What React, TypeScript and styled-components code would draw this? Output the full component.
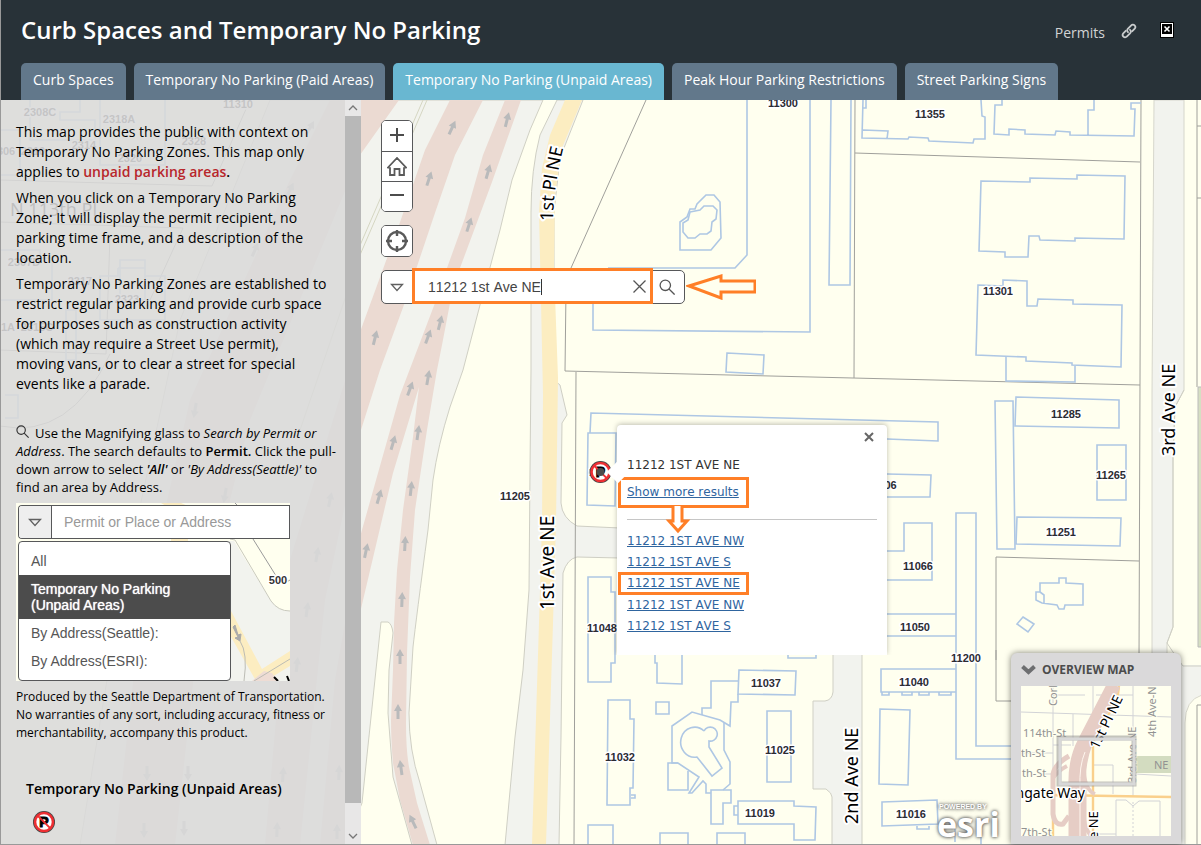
import React from "react";
import styled, { createGlobalStyle, css } from "styled-components";

const UI = '"Open Sans", "Noto Sans", sans-serif';
const ARIAL = '"Liberation Sans", Arial, sans-serif';
const VERDANA = '"DejaVu Sans", Verdana, sans-serif';
const ORANGE = "#ff7f27";
const LINE = "#57585a";

const GlobalStyle = createGlobalStyle`
  *, *::before, *::after { box-sizing: border-box; }
  body { margin: 0; background: #ffffef; font-family: ${UI}; color: #000; }
  p, h1, h2, h3, ul { margin: 0; padding: 0; }
  button { font: inherit; margin: 0; padding: 0; cursor: pointer; }
`;

/* ---------- page frame ---------- */
const Page = styled.div`
  display: flex;
  flex-direction: column;
  min-height: 100vh;
  border-left: 1px solid #999;
  border-bottom: 1px solid #999;
`;

const Header = styled.header`
  display: flex;
  flex-direction: column;
  background: #283238;
  color: #fff;
`;

const TitleRow = styled.div`
  display: flex;
  align-items: center;
  justify-content: space-between;
  height: 63px;
  padding: 0 27px 4px 20px;
`;

const Title = styled.h1`
  font-size: 24px;
  font-weight: 600;
  line-height: 32px;
`;

const HeaderLinks = styled.div`
  display: flex;
  align-items: center;
`;

const PermitsLink = styled.a`
  margin: 6px 16px 0 0;
  color: #d2d4d5;
  font-size: 14px;
  line-height: 20px;
  text-decoration: none;
`;

const IconLink = styled.a`
  display: flex;
  margin: 2px 23px 0 0;
`;

const CloseBox = styled.button`
  display: flex;
  border: 0;
  background: none;
`;

const TabBar = styled.nav`
  display: flex;
  gap: 8px;
  padding-left: 20px;
`;

const Tab = styled.button<{ $active?: boolean }>`
  height: 37px;
  padding: 0 12px 3px;
  border: 0;
  border-radius: 5px 5px 0 0;
  background: ${(p) => (p.$active ? "#69b7d1" : "#62788b")};
  color: #fff;
  font-size: 14px;
  line-height: 20px;
  white-space: nowrap;
`;

const Main = styled.main`
  flex: 1;
  display: grid;
  grid-template-columns: 360px minmax(0, 1fr);
  grid-template-rows: minmax(744px, 1fr);
  background: #ffffef;
`;

const MapDrawing = styled.svg`
  grid-column: 1 / -1;
  grid-row: 1;
  width: 100%;
  height: 100%;
`;

/* ---------- side panel ---------- */
const Panel = styled.aside`
  grid-column: 1;
  grid-row: 1;
  display: flex;
  z-index: 1;
`;

const PanelBody = styled.div`
  flex: 1;
  padding: 22px 16px 0 15px;
  background: rgba(218, 217, 218, 0.88);
`;

const Copy = styled.p`
  margin-bottom: 6px;
  font-size: 14px;
  line-height: 20px;
`;

const Warn = styled.strong`
  font-weight: 600;
  color: #b8262b;
`;

const Strong = styled.strong`
  font-weight: 600;
`;

const Hint = styled.p`
  margin: 30px -10px 7px 0;
  font-size: 13px;
  line-height: 18px;
`;

const InlineIcon = styled.svg`
  margin-right: 6px;
`;

const Disclaimer = styled.p`
  margin-top: 7px;
  font-size: 12px;
  line-height: 18px;
`;

const Legend = styled.section`
  padding: 37px 0 0 10px;
`;

const LegendTitle = styled.h2`
  margin-bottom: 11px;
  font-size: 14px;
  font-weight: 600;
  line-height: 20px;
`;

const LegendSwatch = styled.div`
  padding-left: 6px;
`;

const ScrollBar = styled.div`
  display: flex;
  flex-direction: column;
  width: 16px;
  background: #e8e7e7;
`;

const ScrollButton = styled.button`
  display: flex;
  align-items: center;
  justify-content: center;
  height: 16px;
  border: 0;
  background: #e8e7e7;
`;

const ScrollThumb = styled.div`
  flex: 1;
  margin-bottom: 25px;
  background: #b8b8b8;
`;

/* ---------- search sample ---------- */
const Sample = styled.div`
  display: grid;
  width: 274px;
  height: 178px;
  overflow: hidden;
  background: #f2f3ee;
`;

const SampleBackdrop = styled.svg`
  grid-area: 1 / 1;
`;

const SampleWidgets = styled.div`
  grid-area: 1 / 1;
  z-index: 1;
  padding: 2px 0 0 2px;
`;

const SampleField = styled.div`
  display: flex;
  height: 34px;
  border: 1px solid ${LINE};
  border-right: 0;
  border-radius: 4px 0 0 4px;
  background: #fff;
  overflow: hidden;
`;

const arrowButton = css`
  display: flex;
  align-items: center;
  justify-content: center;
  flex: none;
  border: 0;
`;

const SampleArrow = styled.button`
  ${arrowButton}
  width: 33px;
  border-right: 1px solid ${LINE};
  background: #eee;
`;

const SampleInput = styled.input`
  flex: 1;
  min-width: 0;
  padding: 0 12px;
  border: 0;
  border-right: 1px solid ${LINE};
  font: 14px ${ARIAL};
  font-kerning: none;
  color: #444;
  outline: 0;
  &::placeholder { color: #999; opacity: 1; }
`;

const SampleMenu = styled.ul`
  width: 213px;
  margin-top: 2px;
  padding: 5px 0;
  border: 1px solid ${LINE};
  border-radius: 4px;
  background: #fff;
  list-style: none;
`;

const SampleItem = styled.li<{ $selected?: boolean }>`
  padding: 6px 40px 6px 12px;
  font: 14px/16px ${ARIAL};
  color: #565656;
  ${(p) =>
    p.$selected &&
    css`
      background: #4c4c4c;
      color: #fff;
      text-shadow: 0 0 1px #fff;
    `}
`;

/* ---------- map overlays ---------- */
const MapArea = styled.div`
  grid-column: 2;
  grid-row: 1;
  position: relative;
  display: flex;
  flex-direction: column;
  align-items: flex-start;
  gap: 13px;
  padding: 20px;
  z-index: 1;
`;

const ToolStack = styled.div`
  display: flex;
  flex-direction: column;
  width: 32px;
  border: 1px solid ${LINE};
  border-radius: 5px;
  background: #fff;
  overflow: hidden;
`;

const Tool = styled.button`
  ${arrowButton}
  height: 30px;
  background: #fff;
  & + & { border-top: 1px solid ${LINE}; }
`;

const SearchRow = styled.div`
  display: flex;
  align-items: center;
  gap: 1px;
`;

const SearchBar = styled.form`
  display: flex;
  width: 304px;
  height: 34px;
  border: 1px solid ${LINE};
  border-radius: 5px;
  background: #fff;
`;

const SearchButton = styled.button<{ $width: number }>`
  ${arrowButton}
  width: ${(p) => p.$width}px;
  background: none;
  &[type="submit"] { padding-right: 3px; }
`;

const SearchField = styled.div`
  position: relative;
  flex: 1;
  display: flex;
  align-items: center;
  margin: -3px 0 -1px;
  border: 3px solid ${ORANGE};
  background: #fff;
`;

const SearchInput = styled.input`
  flex: 1;
  min-width: 0;
  padding: 2px 0 0 13px;
  border: 0;
  background: none;
  font: 14px ${ARIAL};
  font-kerning: none;
  color: #444;
  outline: 0;
`;

const Caret = styled.span`
  position: absolute;
  left: 126px;
  top: 8px;
  width: 1px;
  height: 16px;
  background: #333;
`;

const ClearButton = styled.button`
  ${arrowButton}
  width: 22px;
  background: none;
`;

const Popup = styled.section`
  position: absolute;
  left: 256px;
  top: 325px;
  width: 270px;
  height: 230px;
  padding: 0 10px;
  border-radius: 4px 4px 0 0;
  background: #fff;
  box-shadow: 0 -1px 5px rgba(0, 0, 0, 0.25);
  clip-path: inset(-8px -8px 0 -20px);
  font: 12px/16px ${VERDANA};
  font-kerning: none;
  color: #333;
`;

const PopupTail = styled.span`
  position: absolute;
  left: -7px;
  top: 39px;
  width: 16px;
  height: 16px;
  background: #fff;
  transform: rotate(45deg);
`;

const PopupTop = styled.div`
  display: flex;
  justify-content: flex-end;
  height: 32px;
  padding: 4px 0 12px;
`;

const PopupClose = styled.button`
  ${arrowButton}
  width: 16px;
  height: 16px;
  background: none;
`;

const PopupTitle = styled.p`
  line-height: 16px;
`;

const Marked = styled.div<{ $tall?: boolean }>`
  width: 131px;
  margin: ${(p) => (p.$tall ? "0 0 0 -9px" : "-1px 0 0 -9px")};
  padding: ${(p) => (p.$tall ? "4px 6px 5px" : "0 6px")};
  border: 3px solid ${ORANGE};
  line-height: ${(p) => (p.$tall ? 16 : 17)}px;
`;

const PopupLink = styled.a`
  color: #2f659f;
  text-decoration: underline;
`;

const MoreResults = styled.div`
  display: flex;
  flex-direction: column;
  margin-top: 4px;
`;

const Divider = styled.div`
  height: 1px;
  margin-top: 11px;
  background: #c6c6c6;
`;

const ResultRow = styled.div`
  line-height: 21px;
`;

const Results = styled.div`
  padding-top: 11px;
`;

const DownArrow = styled.svg`
  position: absolute;
  left: 48px;
  top: 81px;
`;

const Overview = styled.section`
  position: absolute;
  right: 20px;
  bottom: 0;
  width: 170px;
  padding: 0 10px 8px;
  border-radius: 6px 6px 0 0;
  background: #dad9da;
  box-shadow: 0 0 6px rgba(0, 0, 0, 0.5);
`;

const OverviewTitle = styled.h2`
  display: flex;
  align-items: center;
  gap: 6px;
  height: 33px;
  font-size: 12px;
  font-weight: 700;
  line-height: 16px;
  color: #4c4c4c;
`;

const OverviewMap = styled.svg`
  display: block;
  background: #ffffef;
`;

const Powered = styled.a`
  position: absolute;
  right: 202px;
  bottom: 0;
  display: flex;
  flex-direction: column;
  width: 62px;
  color: #fff;
  font-weight: 700;
  text-decoration: none;
  text-shadow: 0 0 3px #555, 0 0 4px #777;
`;

const PoweredBy = styled.span`
  padding-left: 2px;
  font: 700 7px/8px ${ARIAL};
`;

const Esri = styled.span`
  margin-top: -7px;
  font: 700 34px/40px ${UI};
`;

/* ---------- icons ---------- */
const Triangle = () => (
  <svg width="14" height="9" viewBox="0 0 14 9" fill="none" stroke="#606060" strokeWidth="1.3">
    <path d="M1.5 1.5h11L7 7.5z" />
  </svg>
);

const magnifierPath = (
  <>
    <circle cx="6.3" cy="6.3" r="5.2" />
    <path d="M10 10l5.6 5.6" />
  </>
);

const NoParkingMark = () => (
  <>
    <circle r="11" fill="#444" />
    <circle r="9" fill="#fff" stroke="#ee2f33" strokeWidth="2.6" />
    <text y="5" textAnchor="middle" fontFamily={ARIAL} fontSize="14" fontWeight="bold" stroke="#000" strokeWidth="1">P</text>
    <path d="M-6.4-6.4L6.4 6.4" stroke="#ee2f33" strokeWidth="2" />
  </>
);

const NoParking = () => (
  <svg width="24" height="24" viewBox="-12 -12 24 24">
    <NoParkingMark />
  </svg>
);

/* ---------- map data ---------- */
const flow: [number, number, number][] = [
  [452, 128, 25], [429, 179, 18], [507, 120, 14], [488, 172, 16], [469, 225, 18], [440, 323, 14],
  [428, 337, 20], [375, 338, 14], [428, 378, 10], [410, 389, 20], [393, 443, 16], [418, 433, 8],
  [411, 489, 6], [379, 497, 16], [405, 544, 3], [366, 551, 12], [402, 600, 2], [400, 657, 0],
  [398, 712, 0], [401, 768, -8], [413, 822, -26], [310, 128, 30], [290, 190, 26], [255, 250, 24],
  [195, 410, 190], [225, 495, 190], [330, 500, 12], [317, 555, 10], [307, 610, 8], [297, 665, 6],
  [147, 773, 180], [188, 773, 180], [283, 775, 4], [339, 773, 2], [144, 830, 180], [184, 828, 180],
  [277, 830, 2], [337, 832, 0],
];

const houseNumbers: [number, number, string][] = [
  [783, 107, "11300"], [930, 118, "11355"], [998, 295, "11301"], [1066, 418, "11285"],
  [1111, 479, "11265"], [1061, 536, "11251"], [918, 570, "11066"], [915, 631, "11050"],
  [966, 662, "11200"], [914, 686, "11040"], [911, 818, "11016"], [515, 500, "11205"],
  [602, 632, "11048"], [620, 761, "11032"], [766, 687, "11037"], [780, 754, "11025"],
  [760, 817, "11019"], [882, 489, "11106"], [604, 476, "11212"], [238, 108, "11310"],
  [40, 116, "2308C"], [119, 123, "2318A"], [84, 149, "2314"], [194, 145, "2328"],
  [130, 162, "2320"], [3, 155, "2306"], [33, 155, "2310"], [24, 266, "2307D"],
  [80, 285, "2317"], [127, 303, "2323"], [8, 331, "1A"], [37, 331, "2315C"],
];

const parcels = [
  "M646 100L571 268L566 290L565 371L1140 385", "M576 372L574 845", "M855 100L854 378",
  "M855 153L1140 162", "M1141 100L1139 660", "M996 660V557L1139 561", "M996 650V701H1020",
  "M1197 100V387M1197 126h5M1197 198h5M1197 845V705h5",
  "M0 180L212 186L250 100M0 222L183 228L150 300M110 235L106 354L0 350M0 426Q70 440 110 354",
];

const buildings = [
  "M747 100V255L735 268H608", "M810 100V332L593 330V303", "M831 100L829 285H850L851 100",
  "M863 100L862 138L908 139L909 137L928 138L929 141L973 143L974 139H985V117L982 116L981 100M863 130L888 131L887 139M866 100V108H863",
  "M1002 100V105H995L994 134L1009 135V129L1025 130V134L1055 135L1056 131L1070 132V135L1134 136L1135 109H1131V103H1141M1088 135V110H1094V100",
  "M981 181L1030 182V178L1077 179V175L1125 176L1124 239L1075 238V241L1040 240L1039 236H1029L1028 257H1005V252L979 251Z",
  "M978 285L1003 286V280L1027 281V306H1037L1038 299L1073 300V304L1122 305L1121 367L1072 365V363L1026 361V357L976 355Z",
  "M1006 357V381L1075 382V366", "M727 353L764 355L763 374L726 372Z",
  "M706 195H714L720 202L721 238L711 250H680V222L687 217L690 209H695L697 204Z",
  "M690 212L700 210L704 206H713L717 210L716 219L712 222L711 231L707 234H700L695 238H688L683 232V223L688 220Z",
  "M590 433L591 413L938 422V441L887 439", "M588 433H616L615 506L587 505Z",
  "M887 474L931 475L930 497H887", "M887 551H904V523H932V580H887",
  "M1020 759H956V513H976V746H1020", "M887 614H956M887 636H956",
  "M995 401H1013L1015 549H997Z", "M1016 397L1119 400V428L1015 426Z", "M1097 445H1126V500H1097Z",
  "M1017 517L1121 518L1120 546L1016 544Z",
  "M1040 583H1059V578H1066V583L1083 584V605H1065L1064 609H1059L1057 605L1042 603L1036 600V592H1040ZM1040 592L1044 595V603",
  "M1023 617L1034 624L1028 632L1017 624Z",
  "M588 577H611V592H615V663H611V682H588Z", "M655 655V663H657V683L682 684V655", "M788 655V658H816V655",
  "M739 670L796 671L795 695L738 694Z", "M738 681H711V708H702V715", "M738 694V702H731L730 726L720 720L692 712L672 726V763H678L699 777L689 793H692L703 781L706 784V793H711",
  "M724 723V750L730 762V784L723 790", "M678 763H668V790H688V771",
  "M704 731A14 15 0 1 0 697 757L712 776L722 768L709 747V741A7 7 0 1 0 704 731",
  "M711 790H731V803H723V824H711Z", "M608 700H630V719H634L633 788H630V805H607ZM631 795h4v3h-4",
  "M656 702H669V714H656Z", "M767 711H791V782H767Z",
  "M738 801H794V806L816 807L815 840H794V824H738ZM738 806H734V815H738",
  "M588 845V825H613V845", "M660 845V833H688V845", "M717 845V833H745V845",
  "M956 669H881V692H956M882 692v3h7v-3M902 692v3h10v-3M919 692v3h10v-3M939 692v3h12v-3",
  "M880 709L910 710L908 785L879 784Z", "M882 802L937 800L938 824L882 826ZM917 826v3h12v-3", "M955 826V842M981 826V845",
  "M30 100V140H95V120H60V112H80V100M100 100V165H165V100M0 130H20V175H0M118 268V276H100V320H165V276H145V268H118M120 260H145V300H120ZM0 250H40V258H52V300H0M66 310H76V360H66ZM5 395H18V418H5",
];

const CityMap = () => (
  <MapDrawing role="img" aria-label="Street map">
    <g transform="translate(-1 -100)">
      <path d="M543 100L530 130L512 180L500 230L480 305L463 370L450 407Q438 445 433 480L428 530Q416 620 413 647L409 713Q409 750 420 783L437 845H80L120 600L180 320L270 100Z" fill="#f2f3ee" stroke="#d0d0c4" />
      <g fill="#ebdad2">
        <path d="M399 100L360 155L250 420L200 620L175 845H115L140 620L190 400L290 180L330 100Z" />
        <path d="M450 100L483 100L455 155L436 210L405 302L380 370L360 433L325 600L300 845H265L290 560L360 332L398 228L425 150Z" />
        <path d="M505 100H521L492 182L460 268L450 303L442 345L437 370L427 430L415 510L410 577L407 653L406 723Q406 750 409 767L417 803L430 845H413L400 800L393 763Q391 740 391 720L393 670L394 623L397 570L403 510L413 437L419 387L393 473L360 613L350 700L345 845H320L335 680L360 537L400 395L435 303L447 268L465 218L483 155Z" />
      </g>
      <path d="M427 100L360 255L300 430M423 100L358 250" fill="none" stroke="#d5d6c2" />
      <path d="M381 622H388Q392 624 393 633L389 670L388 713L393 777L412 845H345L362 803Z" fill="#ffffef" stroke="#d0d0c4" />
      <path d="M557 100L540 135Q531 170 531 212V370L530 470L529 590L523 670L515 737L505 845H559L561 737L563 573Q567 559 577 557L620 558V528L577 526Q562 518 561 503L562 423L567 415L560 385L554 380V212L560 158L583 100Z" fill="#f2f3ee" stroke="#cfcfc4" />
      <path d="M565 100H582L562 148L555 195L554 268L558 378L556 523L553 623L546 845H532L539 623L542 523L543 395L541 302L539 212L542 168L550 135Z" fill="#fcedc1" />
      <path d="M833 650V692Q832 700 825 701H813V789H826Q832 793 832 797V845H862V650Z" fill="#f2f3ee" stroke="#cfcfc4" />
      <path d="M1154 100H1184V390L1175 407L1173 457V627L1167 643V660H1202V695Q1185 700 1185 723V845H1152V395Z" fill="#f2f3ee" stroke="#d6d6cc" />
      <path d="M1184 390L1175 407L1173 457V627L1167 643L1173 652L1183 666H1202" fill="none" stroke="#cfcfc4" />
      <path d="M1174 628L1168 643L1174 652L1183 665H1201V640H1190V420Z" fill="#ffffef" />
      <path d="M1198 387H1203V647H1198Z" fill="#d6dfc2" stroke="#bbb" />
      <g fill="none" stroke="#a0a09b">{parcels.map((d) => <path key={d} d={d} />)}</g>
      <g fill="none" stroke="#aec7e4" strokeWidth="1.6">{buildings.map((d) => <path key={d} d={d} />)}</g>
      <g fill="#b9babb">
        {flow.map(([x, y, r]) => (
          <path key={`${x}-${y}`} transform={`translate(${x} ${y}) rotate(${r})`} d="M0-8L4-1H1.5V7H-1.5V-1H-4Z" />
        ))}
      </g>
      <g fontFamily={ARIAL} fontSize="11" fontWeight="bold" fill="#2b2b33" textAnchor="middle" stroke="#fff" strokeWidth="3" strokeLinejoin="round" paintOrder="stroke">
        {houseNumbers.map(([x, y, t]) => <text key={t} x={x} y={y}>{t}</text>)}
      </g>
      <g fontFamily='"Noto Sans", sans-serif' fontSize="18" fill="#000" stroke="#fff" strokeWidth="4" strokeLinejoin="round" paintOrder="stroke">
        <path id="place-curve" d="M553 221Q553 185 568 130" fill="none" stroke="none" />
        <text><textPath href="#place-curve">1st Pl NE</textPath></text>
        <text transform="translate(554 610) rotate(-90)" fontSize="19">1st Ave NE</text>
        <text transform="translate(858 824) rotate(-90)">2nd Ave NE</text>
        <text transform="translate(1175 456) rotate(-90)">3rd Ave NE</text>
        <text x="10" y="216">N 113th Pl</text>
      </g>
      <g transform="translate(600.5 472)">
        <NoParkingMark />
        <circle r="4" fill="#4c4c4c" />
      </g>
    </g>
  </MapDrawing>
);

const MiniMap = () => (
  <OverviewMap width="150" height="150" viewBox="0 0 150 150" role="img" aria-label="Overview map">
    <g fill="none" stroke="#d2d3d6">
      <path d="M0 26L150 31M32 0V110M32 9H64M52 28V60M72 0V28M112 0V110M75 9H112M0 67H32M18 88H32M32 59H50M114 88L150 90M73 79H92V108M95 150V114H105L112 120L118 115H139V150M72 148H95" />
      <path d="M112 116V150" strokeDasharray="2 2" />
    </g>
    <path d="M114 70H150V87H114Z" fill="#d3dcc0" />
    <g fill="none" stroke="#fad08c" strokeWidth="2.4">
      <path d="M98 0L96 16L78 42L72 58V150M32 109L150 111M32 109V150" />
    </g>
    <g fill="none" stroke="#e6cdc5">
      <path d="M92 0L63 56Q53 75 54 100V150" strokeWidth="13" />
      <path d="M96 0L68 58Q60 78 62 100V150" strokeWidth="7" />
      <path d="M48 70Q34 78 32 88V128Q34 140 42 138L48 130" strokeWidth="5" />
      <path d="M32 92Q38 84 46 80M63 86Q64 104 74 108M62 124Q62 140 70 150" strokeWidth="4" />
    </g>
    <path d="M64 66Q58 80 59 102V150" fill="none" stroke="#fff6ee" />
    <g fontFamily='"Noto Sans", sans-serif' fontSize="11" fill="#929292" stroke="#ffffef" strokeWidth="2" paintOrder="stroke">
      <text x="2" y="51">114th-St</text>
      <text x="0" y="71">th-St</text>
      <text x="1" y="91">th-St</text>
      <text x="0" y="150">7th-St</text>
      <text transform="translate(36 20) rotate(-90)">Corliss</text>
      <text transform="translate(135 51) rotate(-90)">4th Ave-NE</text>
      <text transform="translate(115 97) rotate(-90)">3rd Ave NE</text>
      <text x="133" y="83" stroke="none">NE</text>
    </g>
    <g fontFamily='"Noto Sans", sans-serif' fontSize="14" fill="#000" stroke="#fff" strokeWidth="3" strokeLinejoin="round" paintOrder="stroke">
      <text x="64" y="112" textAnchor="end">ngate Way</text>
      <text transform="translate(77 64) rotate(-64)">1st Pl NE</text>
      <text transform="translate(77 153) rotate(-90)" fontSize="13">e NE</text>
    </g>
    <rect x="38" y="52" width="75" height="46" fill="none" stroke="#8a8a8a" strokeWidth="5" opacity="0.5" />
    <rect x="39" y="53" width="74" height="45" fill="none" stroke="#d8d8d8" strokeWidth="3" />
  </OverviewMap>
);

const tabs = [
  "Curb Spaces",
  "Temporary No Parking (Paid Areas)",
  "Temporary No Parking (Unpaid Areas)",
  "Peak Hour Parking Restrictions",
  "Street Parking Signs",
];

const sampleItems = ["All", "Temporary No Parking (Unpaid Areas)", "By Address(Seattle):", "By Address(ESRI):"];

const results = ["11212 1ST AVE NW", "11212 1ST AVE S", "11212 1ST AVE NE", "11212 1ST AVE NW", "11212 1ST AVE S"];

export default function App() {
  return (
    <Page>
      <GlobalStyle />
      <Header>
        <TitleRow>
          <Title>Curb Spaces and Temporary No Parking</Title>
          <HeaderLinks>
            <PermitsLink href="#permits">Permits</PermitsLink>
            <IconLink href="#link" aria-label="Copy link">
              <svg width="16" height="16" viewBox="0 0 16 16" fill="none" stroke="#c9cccd" strokeWidth="1.8" strokeLinecap="round">
                <path d="M7 9.2C5.8 8 6 6.6 7 5.6L10 2.6C11.2 1.4 12.600 1.4 13.6 2.4S14.6 4.8 13.5 6L11.3 8.2" />
                <path d="M9 6.8C10.2 8 10 9.4 9 10.4L6 13.4C4.8 14.6 3.4 14.6 2.4 13.6S1.4 11.2 2.5 10L4.7 7.8" />
              </svg>
            </IconLink>
            <CloseBox aria-label="Close">
              <svg width="14" height="16" viewBox="0 0 14 16">
                <path d="M0 0h14v16H0z" fill="#000" />
                <path d="M1 1h12v14H1z" fill="#fff" />
                <path d="M2 2h10v10H2z" fill="#000" />
                <path d="M4.5 4.5l5 5m0-5l-5 5" stroke="#fff" strokeWidth="1.6" />
              </svg>
            </CloseBox>
          </HeaderLinks>
        </TitleRow>
        <TabBar>
          {tabs.map((t, i) => <Tab key={t} $active={i === 2}>{t}</Tab>)}
        </TabBar>
      </Header>

      <Main>
        <CityMap />

        <Panel>
          <PanelBody>
            <Copy>
              This map provides the public with context on Temporary No Parking Zones. This map only applies to{" "}
              <Warn>unpaid parking areas</Warn><Strong>.</Strong>
            </Copy>
            <Copy>
              When you click on a Temporary No Parking Zone; It will display the permit recipient, no parking time
              frame, and a description of the location.
            </Copy>
            <Copy>
              Temporary No Parking Zones are established to restrict regular parking and provide curb space for purposes
              such as construction activity (which may require a Street Use permit), moving vans, or to clear a street
              for special events like a parade.
            </Copy>
            <Hint>
              <InlineIcon width="13" height="13" viewBox="0 0 16 16" fill="none" stroke="#333" strokeWidth="1.4">{magnifierPath}</InlineIcon>
              Use the Magnifying glass to <em>Search by Permit or Address</em>. The search defaults to{" "}
              <Strong>Permit.</Strong> Click the pull-down arrow to select <em><Strong>'All'</Strong></em> or{" "}
              <em>'By Address(Seattle)'</em> to find an area by Address.
            </Hint>
            <Sample>
              <SampleBackdrop width="274" height="178" viewBox="0 0 274 178">
                <path d="M0 0H274V38H0ZM218 38L255 98Q262 108 274 108V38ZM0 36H6V178H0Z" fill="#ffffef" />
                <path d="M145 0H165L172 3H150ZM155 36H172V40H155Z" fill="#fcedc1" />
                <path d="M214 36L219 37L255 98Q262 108 274 108" fill="none" stroke="#c9c9be" />
                <path d="M215 108L246 166L274 148V163L256 174L262 178H240L214 132Z" fill="#fcedc1" />
                <path d="M219 0L222 3M237 36L262 76L267 81L274 77" fill="none" stroke="#9a9a9a" />
                <path d="M236 178L248 168L256 170L262 178Z" fill="#eedcd4" />
                <path d="M217 124L222 134L219 135L224 138L225 131L222 132L219 122Z" fill="#aaa" stroke="#aaa" />
                <path d="M238 178L274 156M224 138Q232 150 228 178" fill="none" stroke="#bcbcb4" />
                <path d="M258 174L262 178M271 173L273 178" stroke="#000" strokeWidth="2" />
                <text x="262" y="81" textAnchor="middle" fontFamily={ARIAL} fontSize="11" fontWeight="bold" fill="#333" stroke="#fff" strokeWidth="3" paintOrder="stroke">500</text>
              </SampleBackdrop>
              <SampleWidgets>
                <SampleField>
                  <SampleArrow aria-label="Choose a source"><Triangle /></SampleArrow>
                  <SampleInput aria-label="Sample search" placeholder="Permit or Place or Address" />
                </SampleField>
                <SampleMenu>
                  {sampleItems.map((t, i) => <SampleItem key={t} $selected={i === 1}>{t}</SampleItem>)}
                </SampleMenu>
              </SampleWidgets>
            </Sample>
            <Disclaimer>
              Produced by the Seattle Department of Transportation. No warranties of any sort, including accuracy,
              fitness or merchantability, accompany this product.
            </Disclaimer>
            <Legend>
              <LegendTitle>Temporary No Parking (Unpaid Areas)</LegendTitle>
              <LegendSwatch><NoParking /></LegendSwatch>
            </Legend>
          </PanelBody>
          <ScrollBar>
            <ScrollButton aria-label="Scroll up">
              <svg width="10" height="6" viewBox="0 0 10 6" fill="none" stroke="#777" strokeWidth="1.3"><path d="M1 5l4-4 4 4" /></svg>
            </ScrollButton>
            <ScrollThumb />
            <ScrollButton aria-label="Scroll down">
              <svg width="10" height="6" viewBox="0 0 10 6" fill="none" stroke="#777" strokeWidth="1.3"><path d="M1 1l4 4 4-4" /></svg>
            </ScrollButton>
          </ScrollBar>
        </Panel>

        <MapArea>
          <ToolStack>
            <Tool aria-label="Zoom in">
              <svg width="16" height="16" viewBox="0 0 16 16" stroke="#4c4c4c" strokeWidth="2"><path d="M1 7h14M8 0v14" /></svg>
            </Tool>
            <Tool aria-label="Home">
              <svg width="20" height="20" viewBox="0 1 20 20" fill="none" stroke="#5a5a5a" strokeWidth="1.8">
                <path d="M1 11.5L10 2L19 11.5L17 12V19H12.500V13H7.500V19H3V12Z" />
              </svg>
            </Tool>
            <Tool aria-label="Zoom out">
              <svg width="16" height="16" viewBox="0 0 16 16" stroke="#4c4c4c" strokeWidth="2"><path d="M1 6h14" /></svg>
            </Tool>
          </ToolStack>
          <ToolStack>
            <Tool aria-label="Find my location">
              <svg width="22" height="22" viewBox="0 0 22 22" fill="none" stroke="#5a5a5a" strokeWidth="2.4">
                <circle cx="11" cy="11" r="9" />
                <path d="M11 0v6M11 16v6M0 11h6M16 11h6" />
              </svg>
            </Tool>
          </ToolStack>
          <SearchRow>
            <SearchBar onSubmit={(e) => e.preventDefault()}>
              <SearchButton $width={30} type="button" aria-label="Choose a source"><Triangle /></SearchButton>
              <SearchField>
                <SearchInput aria-label="Search" defaultValue="11212 1st Ave NE" />
                <Caret />
                <ClearButton type="button" aria-label="Clear">
                  <svg width="13" height="13" viewBox="0 0 13 13" stroke="#555" strokeWidth="1.3"><path d="M.5.5l12 12m0-12l-12 12" /></svg>
                </ClearButton>
              </SearchField>
              <SearchButton $width={31} type="submit" aria-label="Search">
                <svg width="16" height="16" viewBox="0 0 16 16" fill="none" stroke="#555" strokeWidth="1.3">{magnifierPath}</svg>
              </SearchButton>
            </SearchBar>
            <svg width="70" height="26" viewBox="0 0 70 26" fill="none" stroke={ORANGE} strokeWidth="3">
              <path d="M3 12L35 2V7H69V18H35V24Z" />
            </svg>
          </SearchRow>

          <Popup>
            <PopupTail />
            <PopupTop>
              <PopupClose aria-label="Close result">
                <svg width="10" height="10" viewBox="0 0 10 10" stroke="#666" strokeWidth="2"><path d="M1 1l8 8m0-8l-8 8" /></svg>
              </PopupClose>
            </PopupTop>
            <PopupTitle>11212 1ST AVE NE</PopupTitle>
            <MoreResults>
              <Marked $tall><PopupLink href="#more">Show more results</PopupLink></Marked>
              <Divider />
            </MoreResults>
            <DownArrow width="26" height="28" viewBox="0 0 26 28" fill="#fff" stroke={ORANGE} strokeWidth="3">
              <path d="M8 0V15H4L13 25L22 15H17V0" />
            </DownArrow>
            <Results>
              {results.map((r, i) => {
                const link = <PopupLink href="#result">{r}</PopupLink>;
                return i === 2 ? <Marked key={i}>{link}</Marked> : <ResultRow key={i}>{link}</ResultRow>;
              })}
            </Results>
          </Popup>

          <Powered href="#esri">
            <PoweredBy>POWERED BY</PoweredBy>
            <Esri>esri</Esri>
          </Powered>

          <Overview>
            <OverviewTitle>
              <svg width="15" height="10" viewBox="0 0 15 10" fill="none" stroke="#6d6e70" strokeWidth="4"><path d="M1.500 1.500l6 5.500 6-5.500" /></svg>
              OVERVIEW MAP
            </OverviewTitle>
            <MiniMap />
          </Overview>
        </MapArea>
      </Main>
    </Page>
  );
}
